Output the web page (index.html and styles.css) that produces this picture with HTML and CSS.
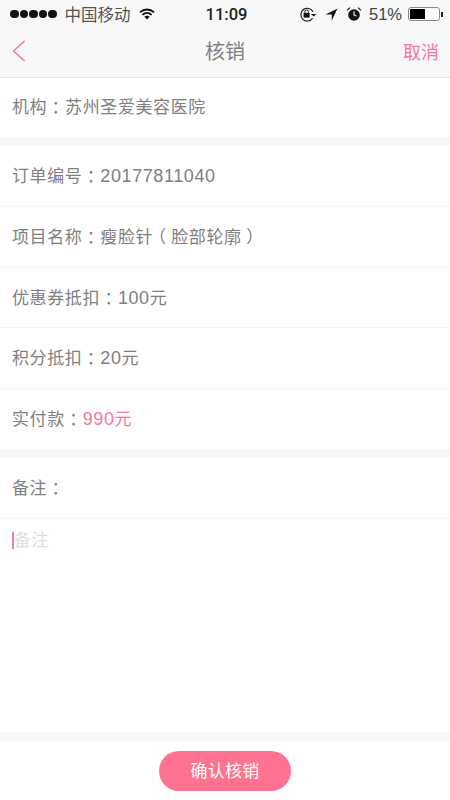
FILE: index.html
```html
<!DOCTYPE html>
<html lang="zh">
<head>
<meta charset="utf-8">
<title>核销</title>
<link rel="stylesheet" href="styles.css">
</head>
<body>
<div class="page">
  <header class="top">
    <div class="status">
      <div class="st-left">
        <span class="dots"><i></i><i></i><i></i><i></i><i></i></span>
        <span class="carrier">中国移动</span>
        <svg class="wifi" viewBox="0 0 18 13" width="16" height="12"><path d="M1 4.6C5.6.4 12.4.4 17 4.6" fill="none" stroke="#111" stroke-width="2"/><path d="M3.8 7.4c3-2.7 7.4-2.7 10.4 0" fill="none" stroke="#111" stroke-width="2"/><path d="M9 12.6 6 9.6c1.8-1.4 4.2-1.4 6 0z" fill="#111"/></svg>
      </div>
      <div class="time">11:09</div>
      <div class="st-right">
        <svg class="lock" viewBox="0 0 18 16" width="18" height="16"><path d="M13.6 11.6A6.4 6.4 0 1 1 14 5.2" fill="none" stroke="#111" stroke-width="1.1" transform="translate(0 .6)"/><path d="M12 8h5.4l-2.7 2.6z" fill="#111"/><rect x="4.6" y="7" width="6" height="4.6" fill="#111"/><path d="M5.9 7V5.6a1.7 1.7 0 0 1 3.4 0V7" fill="none" stroke="#111" stroke-width="1"/></svg>
        <svg class="loc" viewBox="0 0 13 13" width="13" height="13"><path d="M12.5.5 6.8 12.6V6.4H.5z" fill="#111"/></svg>
        <svg class="alarm" viewBox="0 0 16 16" width="16" height="16"><circle cx="8" cy="9" r="5.8" fill="#111"/><path d="M8 5.2V9l2.4 1" fill="none" stroke="#fff" stroke-width="1.1"/><path d="M1 4.4 4 1.6M15 4.4 12 1.6" stroke="#111" stroke-width="1.1"/></svg>
        <span class="pct">51%</span>
        <span class="battery"><span class="level"></span></span><span class="nub"></span>
      </div>
    </div>
    <nav class="nav">
      <svg class="back" viewBox="0 0 14 22" width="14" height="22"><path d="M12.6 1 1.6 11l11 10" fill="none" stroke="#f0769a" stroke-width="1.5"/></svg>
      <h1 class="title">核销</h1>
      <a class="cancel">取消</a>
    </nav>
  </header>

  <div class="row row-org"><span>机构<span class="colon">：</span>苏州圣爱美容医院</span></div>
  <div class="gap"></div>
  <div class="row r60"><span>订单编号<span class="colon">：</span><span class="num">20177811040</span></span></div>
  <div class="row r61 line"><span>项目名称<span class="colon">：</span>瘦脸针<span class="paren">（</span>脸部轮廓<span class="paren">）</span></span></div>
  <div class="row r60 line"><span>优惠券抵扣<span class="colon">：</span><span class="num">100</span>元</span></div>
  <div class="row r61 line"><span>积分抵扣<span class="colon">：</span><span class="num">20</span>元</span></div>
  <div class="row r61 line"><span>实付款<span class="colon">：</span><span class="pink"><span class="num">990</span>元</span></span></div>
  <div class="gap"></div>
  <div class="row r60"><span>备注<span class="colon">：</span></span></div>
  <div class="note line"><span class="caret"></span><span class="ph">备注</span></div>
  <div class="gap"></div>
  <div class="foot"><button class="confirm">确认核销</button></div>
</div>
</body>
</html>
```
FILE: styles.css
```css
* { box-sizing: border-box; }
html, body { margin: 0; padding: 0; background: #fff; }
body { font-family: "Noto Sans CJK SC", "Liberation Sans", sans-serif; color: #808080; }
.page { width: 450px; height: 800px; display: flex; flex-direction: column; overflow: hidden; }
.top { height: 78px; background: #f8f8f8; border-bottom: 1px solid #e4e4e4; flex: none; }
.status { height: 28px; display: flex; align-items: center; justify-content: space-between; padding: 0 7px 0 10px; position: relative; color: #333; font-size: 16px; }
.st-left, .st-right { display: flex; align-items: center; }
.dots { display: flex; gap: 1px; }
.dots i { width: 8.5px; height: 8.5px; border-radius: 50%; background: #111; }
.carrier { margin-left: 8px; color: #555; font-size: 16.5px; line-height: 20px; }
.wifi { margin-left: 8px; }
.time { position: absolute; left: 0; right: 0; text-align: center; font: 500 16.5px Roboto, "Liberation Sans", sans-serif; color: #222; padding-left: 3px; }
.lock { margin-right: 8px; }
.loc { margin-right: 8px; }
.alarm { margin-right: 7px; }
.pct { font: 16.5px "Liberation Sans", sans-serif; color: #444; margin-right: 6px; }
.battery { width: 32px; height: 14px; border: 1px solid #888; border-radius: 3px; padding: 1px; background: #fff; display: flex; }
.level { width: 15px; background: #000; }
.nub { width: 2px; height: 5px; background: #222; margin-left: 1px; }
.nav { height: 49px; display: flex; align-items: center; justify-content: space-between; padding: 0 11px 3px 12px; position: relative; }
.title { position: absolute; left: 0; right: 0; top: 8px; margin: 0; text-align: center; font-size: 20px; line-height: 30px; font-weight: 400; color: #808080; }
.cancel { font-size: 18px; line-height: 24px; color: #f4779b; }
.row { padding: 0 12px 3px; display: flex; align-items: center; font-size: 17px; letter-spacing: .6px; color: #808080; flex: none; }
.row-org { height: 59px; padding-bottom: 5px; }
.colon { font-family: "Noto Sans CJK TC", sans-serif; font-feature-settings: "halt"; padding: 0 4.4px; }
.num { font-family: "Liberation Sans", sans-serif; font-size: 18px; }
.paren { font-feature-settings: "halt"; padding: 0 4.5px; }
.gap { height: 9px; background: #f7f7f7; flex: none; }
.r61 { height: 61px; }
.r60 { height: 60px; }
.line { border-top: 1px solid #f3f3f3; }
.pink { color: #f4779b; }
.note { height: 214px; padding: 8px 12px 0; display: flex; align-items: flex-start; font-size: 17px; letter-spacing: .6px; flex: none; }
.caret { width: 2px; height: 17px; background: #f17fa3; margin-top: 5px; }
.ph { color: #dedede; line-height: 24px; }
.foot { flex: 1; display: flex; justify-content: center; padding-top: 10px; }
.confirm { width: 132px; height: 40px; border: 0; border-radius: 20px; background: #ff7390; color: #fff; font: 17px "Noto Sans CJK SC", sans-serif; letter-spacing: .3px; padding: 0 0 3px; }
```
